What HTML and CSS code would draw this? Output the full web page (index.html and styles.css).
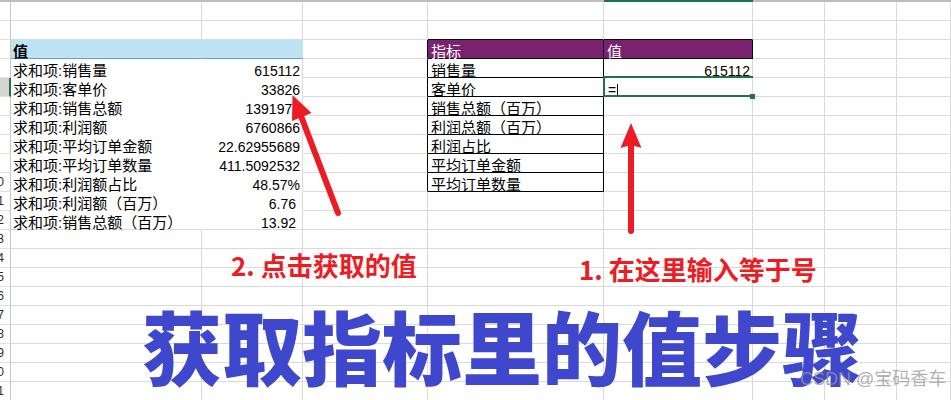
FILE: index.html
```html
<!DOCTYPE html>
<html lang="zh-CN">
<head>
<meta charset="utf-8">
<title>获取指标里的值步骤</title>
<link rel="stylesheet" href="styles.css">
</head>
<body>
<div class="sheet">
  <div class="colhead"><div></div><div></div><div></div><div></div><div></div><div class="cur"></div><div></div><div></div><div></div></div>

  <div class="row"><div class="rh"></div><div class="c"></div><div class="c"></div><div class="c"></div><div class="c"></div><div class="c"></div><div class="c"></div><div class="c"></div><div class="c"></div></div>
  <div class="row"><div class="rh"></div><div class="c"></div><div class="c"></div><div class="c"></div><div class="c bb"></div><div class="c bb"></div><div class="c"></div><div class="c"></div><div class="c"></div></div>
  <div class="row"><div class="rh"></div><div class="c pvh pa">值</div><div class="c pvh"></div><div class="c br"></div><div class="c hd bx">指标</div><div class="c hd bx">值</div><div class="c"></div><div class="c"></div><div class="c"></div></div>
  <div class="row"><div class="rh"></div><div class="c pv pa">求和项:销售量</div><div class="c pv num">615112</div><div class="c br"></div><div class="c bx">销售量</div><div class="c num">615112</div><div class="c"></div><div class="c"></div><div class="c"></div></div>
  <div class="row"><div class="rh on"></div><div class="c pv pa">求和项:客单价</div><div class="c pv num">33826</div><div class="c br"></div><div class="c bx">客单价</div><div class="c sel">=<span class="caret"></span><span class="handle"></span></div><div class="c"></div><div class="c"></div><div class="c"></div></div>
  <div class="row"><div class="rh"></div><div class="c pv pa">求和项:销售总额</div><div class="c pv num">1391971</div><div class="c br"></div><div class="c bx">销售总额（百万）</div><div class="c"></div><div class="c"></div><div class="c"></div><div class="c"></div></div>
  <div class="row"><div class="rh"></div><div class="c pv pa">求和项:利润额</div><div class="c pv num">6760866</div><div class="c br"></div><div class="c bx">利润总额（百万）</div><div class="c"></div><div class="c"></div><div class="c"></div><div class="c"></div></div>
  <div class="row"><div class="rh"></div><div class="c pv pa">求和项:平均订单金额</div><div class="c pv num">22.62955689</div><div class="c br"></div><div class="c bx">利润占比</div><div class="c"></div><div class="c"></div><div class="c"></div><div class="c"></div></div>
  <div class="row"><div class="rh"></div><div class="c pv pa">求和项:平均订单数量</div><div class="c pv num">411.5092532</div><div class="c br"></div><div class="c bx">平均订单金额</div><div class="c"></div><div class="c"></div><div class="c"></div><div class="c"></div></div>
  <div class="row"><div class="rh"><span>10</span></div><div class="c pv pa">求和项:利润额占比</div><div class="c pv num">48.57%</div><div class="c br"></div><div class="c bx">平均订单数量</div><div class="c"></div><div class="c"></div><div class="c"></div><div class="c"></div></div>
  <div class="row"><div class="rh"><span>11</span></div><div class="c pv pa">求和项:利润额（百万）</div><div class="c pv num pad">6.76</div><div class="c"></div><div class="c"></div><div class="c"></div><div class="c"></div><div class="c"></div><div class="c"></div></div>
  <div class="row"><div class="rh"><span>12</span></div><div class="c pv pa last">求和项:销售总额（百万）</div><div class="c pv num pad last">13.92</div><div class="c"></div><div class="c"></div><div class="c"></div><div class="c"></div><div class="c"></div><div class="c"></div></div>
  <div class="row"><div class="rh"><span>13</span></div><div class="c"></div><div class="c"></div><div class="c"></div><div class="c"></div><div class="c"></div><div class="c"></div><div class="c"></div><div class="c"></div></div>
  <div class="row"><div class="rh"><span>14</span></div><div class="c"></div><div class="c"></div><div class="c"></div><div class="c"></div><div class="c"></div><div class="c"></div><div class="c"></div><div class="c"></div></div>
  <div class="row"><div class="rh"><span>15</span></div><div class="c"></div><div class="c"></div><div class="c"></div><div class="c"></div><div class="c"></div><div class="c"></div><div class="c"></div><div class="c"></div></div>
  <div class="row"><div class="rh"><span>16</span></div><div class="c"></div><div class="c"></div><div class="c"></div><div class="c"></div><div class="c"></div><div class="c"></div><div class="c"></div><div class="c"></div></div>
  <div class="row"><div class="rh"><span>17</span></div><div class="c"></div><div class="c"></div><div class="c"></div><div class="c"></div><div class="c"></div><div class="c"></div><div class="c"></div><div class="c"></div></div>
  <div class="row"><div class="rh"><span>18</span></div><div class="c"></div><div class="c"></div><div class="c"></div><div class="c"></div><div class="c"></div><div class="c"></div><div class="c"></div><div class="c"></div></div>
  <div class="row"><div class="rh"><span>19</span></div><div class="c"></div><div class="c"></div><div class="c"></div><div class="c"></div><div class="c"></div><div class="c"></div><div class="c"></div><div class="c"></div></div>
  <div class="row"><div class="rh"><span>20</span></div><div class="c"></div><div class="c"></div><div class="c"></div><div class="c"></div><div class="c"></div><div class="c"></div><div class="c"></div><div class="c"></div></div>
  <div class="row"><div class="rh"><span>21</span></div><div class="c"></div><div class="c"></div><div class="c"></div><div class="c"></div><div class="c"></div><div class="c"></div><div class="c"></div><div class="c"></div></div>
</div>

<svg class="arrows" width="951" height="400" viewBox="0 0 951 400" aria-hidden="true">
  <line x1="338" y1="213" x2="301" y2="116" stroke="#ed1c24" stroke-width="6" stroke-linecap="round"/>
  <polygon points="292.5,95 311.5,113 292,121" fill="#ed1c24"/>
  <line x1="631" y1="231" x2="631" y2="145" stroke="#ed1c24" stroke-width="6" stroke-linecap="round"/>
  <polygon points="631,123 641.5,148 631,145 620.5,148" fill="#ed1c24"/>
</svg>

<div class="note note-2">2. 点击获取的值</div>
<div class="note note-1">1. 在这里输入等于号</div>
<div class="title">获取指标里的值步骤</div>
<div class="wm">CSDN @宝码香车</div>
</body>
</html>
```

FILE: styles.css
```css
* {
  box-sizing: border-box;
  margin: 0;
  padding: 0;
}

body {
  position: relative;
  width: 951px;
  height: 400px;
  overflow: hidden;
  background: #ffffff;
  font-family: "Liberation Sans", "Noto Sans CJK SC", sans-serif;
  font-size: 14px;
  color: #000000;
}

.sheet {
  display: flex;
  flex-direction: column;
}

.colhead,
.row {
  display: grid;
  grid-template-columns: 11px 191px 101px 125px 176px 149px 72px 72px 54px;
}

.colhead {
  height: 2px;
}

.colhead div {
  background: #bdbdbd;
}

.colhead .cur {
  background: #217346;
}

.row {
  height: 19px;
}

.rh {
  display: flex;
  justify-content: flex-end;
  align-items: center;
  padding-right: 6px;
  overflow: hidden;
  border-right: 1px solid #c6c6c6;
  border-bottom: 1px solid #e1e1e1;
  background: #ffffff;
  font-size: 12px;
  color: #2a2a2a;
}

.rh span {
  flex: none;
}

.rh.on {
  background: #d4d4d4;
  border-right: 2px solid #217346;
  padding-right: 5px;
}

.c {
  display: flex;
  align-items: flex-end;
  padding: 0 3px 0 2px;
  line-height: 12px;
  white-space: nowrap;
  border-right: 1px solid #dadada;
  border-bottom: 1px solid #dadada;
  position: relative;
}

.num {
  justify-content: flex-end;
  padding-right: 2px;
}

.num.pad {
  padding-right: 6px;
}

.pa {
  padding-left: 2px;
  border-right-color: #ffffff;
  font-size: 15px;
}

.pv {
  background: #ffffff;
  border-bottom-color: #ffffff;
}

.pv.last {
  border-bottom-color: #dadada;
}

.pvh {
  background: #bee4f4;
  border-right-color: #bee4f4;
  border-bottom-color: #5aa2d6;
  font-weight: 700;
}

.bb {
  border-bottom-color: #000000;
}

.br {
  border-right-color: #000000;
}

.bx {
  border-right-color: #000000;
  border-bottom-color: #000000;
  padding-left: 3px;
  font-size: 15px;
}

.hd {
  background: #7a226f;
  color: #ffffff;
}

.sel {
  padding-left: 4px;
}

.sel::after {
  content: "";
  position: absolute;
  left: -1px;
  top: -2px;
  right: -1px;
  bottom: -1px;
  border-top: 2px solid #217346;
  border-left: 2px solid #217346;
  border-bottom: 2px solid #217346;
}

.caret {
  display: inline-block;
  width: 1px;
  height: 13px;
  margin-left: 1px;
  margin-bottom: -1px;
  background: #000000;
}

.handle {
  position: absolute;
  right: -3px;
  bottom: -3px;
  width: 5px;
  height: 5px;
  background: #217346;
  z-index: 2;
}

.arrows {
  position: absolute;
  left: 0;
  top: 0;
}

.note {
  position: absolute;
  font-family: "Noto Sans CJK SC", sans-serif;
  font-weight: 700;
  font-size: 26px;
  line-height: 1;
  color: #ed1c24;
  white-space: nowrap;
}

.note-2 {
  left: 231px;
  top: 252px;
}

.note-1 {
  left: 579px;
  top: 256px;
}

.title {
  position: absolute;
  left: 142px;
  top: 304px;
  font-family: "Noto Sans CJK SC", sans-serif;
  font-weight: 900;
  font-size: 80px;
  line-height: 1;
  color: #3f48cc;
  white-space: nowrap;
}

.wm {
  position: absolute;
  left: 800px;
  top: 370px;
  font-family: "Liberation Sans", "Noto Sans CJK SC", sans-serif;
  font-size: 18px;
  line-height: 1;
  color: rgba(150, 150, 150, 0.75);
  white-space: nowrap;
}
```
